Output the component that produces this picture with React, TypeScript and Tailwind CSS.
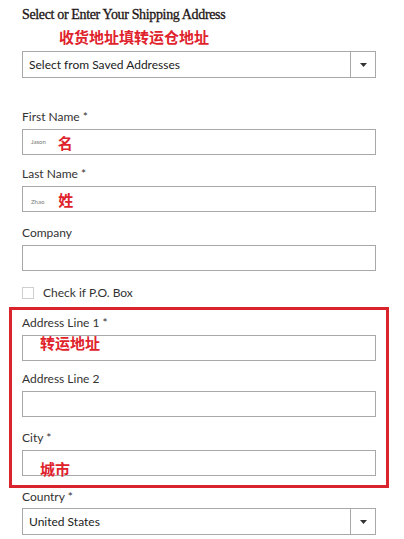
import React from "react";

const sans = "font-['Lato','Open_Sans',sans-serif]";

const Label = ({ text }: { text: string }) => (
  <div className={`${sans} text-[12px] leading-[16px] text-[#333]`}>{text}</div>
);

const Field = ({
  label,
  children,
  className = "",
}: {
  label: string;
  children?: React.ReactNode;
  className?: string;
}) => (
  <div className={className}>
    <Label text={label} />
    <div className="relative mt-[4px] h-[26px] border border-[#a8a8a8] bg-white">{children}</div>
  </div>
);

const SelectBox = ({ value }: { value: string }) => (
  <div className="flex h-[27px] border border-[#a8a8a8] bg-white">
    <div className={`${sans} flex flex-1 items-center pl-[6px] text-[12px] text-[#222]`}>{value}</div>
    <div className="flex w-[25px] items-center justify-center border-l border-[#a8a8a8]">
      <svg width="7" height="4" viewBox="0 0 7 4">
        <path d="M0 0 H7 L3.5 4 Z" fill="#333" />
      </svg>
    </div>
  </div>
);

const redCn = "font-['Noto_Sans_CJK_SC',sans-serif] font-bold text-[#e0222c]";

const App = () => {
  return (
    <div className="h-[539px] w-[404px] overflow-hidden bg-white">
      <div className="w-[376px] pl-[22px]">
        <div className="mt-[6px] font-['Liberation_Serif',serif] text-[14px] leading-[18px] tracking-[-0.35px] text-[#1c1414] [-webkit-text-stroke:0.3px_#1c1414]">
          Select or Enter Your Shipping Address
        </div>
        <div className={`${redCn} ml-[37px] mt-[4px] text-[15px] leading-[18px]`}>收货地址填转运仓地址</div>
        <div className="mt-[5px]">
          <SelectBox value="Select from Saved Addresses" />
        </div>

        <Field label="First Name *" className="mt-[31px]">
          <div className="flex h-full items-center pl-[8px]">
            <span className={`${sans} text-[6px] leading-none text-[#777]`}>Jason</span>
            <span className={`${redCn} ml-[12px] text-[15px] leading-none`}>名</span>
          </div>
        </Field>
        <Field label="Last Name *" className="mt-[11px]">
          <div className="flex h-full items-center pl-[8px]">
            <span className={`${sans} mt-[6px] text-[6px] leading-none text-[#777]`}>Zhao</span>
            <span className={`${redCn} ml-[14px] text-[15px] leading-none`}>姓</span>
          </div>
        </Field>
        <Field label="Company" className="mt-[13px]" />

        <div className="mt-[15px] flex items-center">
          <div className="h-[12px] w-[12px] border border-[#cfcfcf] bg-white" />
          <span className={`${sans} ml-[9px] text-[12px] leading-[14px] text-[#333]`}>Check if P.O. Box</span>
        </div>

        <div className="-mx-[13px] mt-[7px] border-[3px] border-[#d9232d] pb-[9px] pl-[10px] pr-[10px] pt-[5px]">
          <Field label="Address Line 1 *">
            <span className={`${redCn} absolute left-[17px] top-[-1px] text-[15px] leading-[15px]`}>转运地址</span>
          </Field>
          <Field label="Address Line 2" className="mt-[10px]" />
          <Field label="City *" className="mt-[13px]">
            <span className={`${redCn} absolute left-[17px] top-[10px] text-[15px] leading-[15px]`}>城市</span>
          </Field>
        </div>

        <div className="mt-[1px]">
          <Label text="Country *" />
          <div className="mt-[3px]">
            <SelectBox value="United States" />
          </div>
        </div>
      </div>
    </div>
  );
};

export default App;
